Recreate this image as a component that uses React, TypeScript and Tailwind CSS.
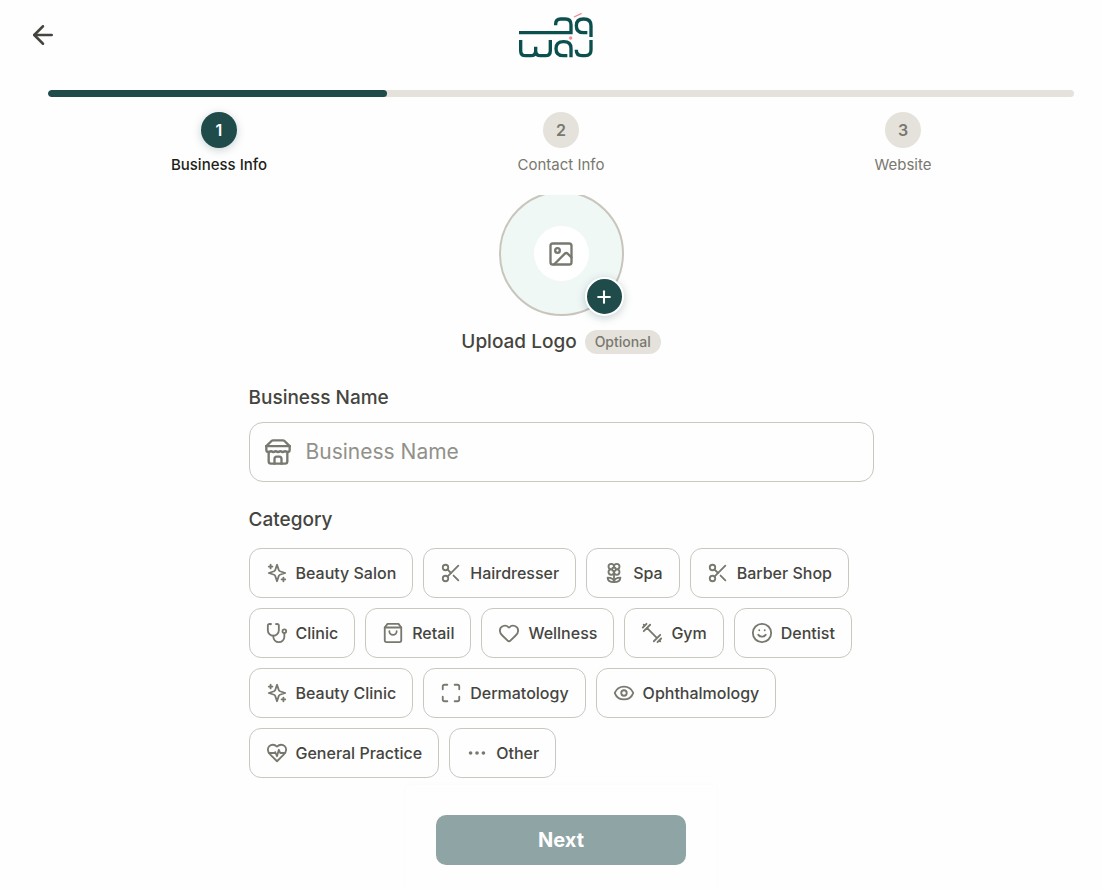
import { useState } from "react";
import type { ReactNode } from "react";
import {
  ArrowLeft,
  Ellipsis,
  Eye,
  Heart,
  Image,
  Maximize,
  Plus,
  Scissors,
  Smile,
} from "lucide-react";

function Icon({ size = 22, children }: { size?: number; children: ReactNode }) {
  return (
    <svg
      width={size}
      height={size}
      viewBox="0 0 24 24"
      fill="none"
      stroke="currentColor"
      strokeWidth={2}
      strokeLinecap="round"
      strokeLinejoin="round"
      className="shrink-0"
      aria-hidden="true"
    >
      {children}
    </svg>
  );
}

const sparkles = (
  <Icon>
    <path d="m12 3-1.912 5.813a2 2 0 0 1-1.275 1.275L3 12l5.813 1.912a2 2 0 0 1 1.275 1.275L12 21l1.912-5.813a2 2 0 0 1 1.275-1.275L21 12l-5.813-1.912a2 2 0 0 1-1.275-1.275L12 3Z" />
    <path d="M5 3v4M19 17v4M3 5h4M17 19h4" />
  </Icon>
);

const flower = (
  <Icon>
    <path d="M12 5a3 3 0 1 1 3 3m-3-3a3 3 0 1 0-3 3m3-3v1M9 8a3 3 0 1 0 3 3M9 8h1m5 0a3 3 0 1 1-3 3m3-3h-1m-2 3v-1" />
    <circle cx="12" cy="8" r="2" />
    <path d="M12 10v12" />
    <path d="M12 22c4.2 0 7-1.667 7-5-4.2 0-7 1.667-7 5Z" />
    <path d="M12 22c-4.2 0-7-1.667-7-5 4.2 0 7 1.667 7 5Z" />
  </Icon>
);

const stethoscope = (
  <Icon>
    <path d="M4.8 2.3A.3.3 0 1 0 5 2H4a2 2 0 0 0-2 2v5a6 6 0 0 0 12 0V4a2 2 0 0 0-2-2h-1a.2.2 0 1 0 .3.3" />
    <path d="M8 15v1a6 6 0 0 0 12 0v-4" />
    <circle cx="20" cy="10" r="2" />
  </Icon>
);

const bag = (
  <Icon>
    <path d="M6 2 3 6v14a2 2 0 0 0 2 2h14a2 2 0 0 0 2-2V6l-3-4Z" />
    <path d="M3 6h18M16 10a4 4 0 0 1-8 0" />
  </Icon>
);

const dumbbell = (
  <Icon>
    <path d="m6.5 6.5 11 11M21 21l-1-1M3 3l1 1M18 22l4-4M2 6l4-4M3 10l7-7M14 21l7-7" />
  </Icon>
);

const heartPulse = (
  <Icon>
    <path d="M19 14c1.49-1.46 3-3.21 3-5.5A5.5 5.5 0 0 0 16.5 3c-1.76 0-3 .5-4.5 2-1.5-1.5-2.74-2-4.5-2A5.5 5.5 0 0 0 2 8.5c0 2.3 1.5 4.05 3 5.5l7 7Z" />
    <path d="M3.22 12H9.5l.5-1 2 4.5 2-7 1.5 3.5h5.27" />
  </Icon>
);

const storefront = (
  <Icon size={28}>
    <path d="m2 7 4.41-4.41A2 2 0 0 1 7.83 2h8.34a2 2 0 0 1 1.42.59L22 7" />
    <path d="M4 12v8a2 2 0 0 0 2 2h12a2 2 0 0 0 2-2v-8" />
    <path d="M15 22v-4a2 2 0 0 0-2-2h-2a2 2 0 0 0-2 2v4M2 7h20" />
    <path d="M22 7v3a2 2 0 0 1-2 2 2.7 2.7 0 0 1-1.59-.63.7.7 0 0 0-.82 0A2.7 2.7 0 0 1 16 12a2.7 2.7 0 0 1-1.59-.63.7.7 0 0 0-.82 0A2.7 2.7 0 0 1 12 12a2.7 2.7 0 0 1-1.59-.63.7.7 0 0 0-.82 0A2.7 2.7 0 0 1 8 12a2.7 2.7 0 0 1-1.59-.63.7.7 0 0 0-.82 0A2.7 2.7 0 0 1 4 12a2 2 0 0 1-2-2V7" />
  </Icon>
);

const steps = ["Business Info", "Contact Info", "Website"];

const categories = [
  { label: "Beauty Salon", icon: sparkles },
  { label: "Hairdresser", icon: <Scissors size={22} /> },
  { label: "Spa", icon: flower },
  { label: "Barber Shop", icon: <Scissors size={22} /> },
  { label: "Clinic", icon: stethoscope },
  { label: "Retail", icon: bag },
  { label: "Wellness", icon: <Heart size={22} /> },
  { label: "Gym", icon: dumbbell },
  { label: "Dentist", icon: <Smile size={22} /> },
  { label: "Beauty Clinic", icon: sparkles },
  { label: "Dermatology", icon: <Maximize size={22} /> },
  { label: "Ophthalmology", icon: <Eye size={22} /> },
  { label: "General Practice", icon: heartPulse },
  { label: "Other", icon: <Ellipsis size={22} /> },
];

function Logo() {
  return (
    <svg width="76" height="48" viewBox="54 33 228 144" fill="none" role="img" aria-label="Waj">
      <g stroke="#0b4f4f" strokeWidth="10">
        <path d="M57 98H218M167 76V72Q167 57 182 57H196Q213 57 213 74V98" />
        <path d="M273 111V77Q273 57 251 57Q229 57 229 77Q229 98 251 98H262" />
        <path d="M62 120V152Q62 167 77 167H92Q107 167 107 152V140M107 152Q107 167 122 167H136Q151 167 151 152V120" />
        <path d="M213 172V145Q213 125 191 125Q168 125 168 146Q168 167 191 167H202" />
        <path d="M273 120V150Q273 167 256 167H246Q229 167 229 151V149" />
      </g>
      <path d="m222 51 23-11" stroke="#f58a9b" strokeWidth="4" />
      <circle cx="212" cy="114" r="5" fill="#f58a9b" />
    </svg>
  );
}

function Stepper({ current }: { current: number }) {
  return (
    <div className="px-7">
      <div className="h-[7px] overflow-hidden rounded-full bg-[#e5e2dc]">
        <div className="h-full w-[33%] rounded-full bg-[#1f4b4b]" />
      </div>
      <ol className="mt-[15px] grid grid-cols-3">
        {steps.map((step, i) => (
          <li key={step} className="flex flex-col items-center gap-[7px]">
            <span
              className={
                i === current
                  ? "flex size-9 items-center justify-center rounded-full bg-[#1f4b4b] font-semibold text-white shadow-[0_2px_8px_rgba(31,75,75,0.25)]"
                  : "flex size-9 items-center justify-center rounded-full bg-[#e5e2dc] font-semibold text-[#78786f]"
              }
            >
              {i + 1}
            </span>
            <span
              className={
                i === current
                  ? "text-[15px] leading-5 font-medium text-[#1e1e1a]"
                  : "text-[15px] leading-5 text-[#78786f]"
              }
            >
              {step}
            </span>
          </li>
        ))}
      </ol>
    </div>
  );
}

export default function App() {
  const [name, setName] = useState("");
  const [category, setCategory] = useState("");

  return (
    <div className="min-h-screen bg-[#fefefe] pl-5 font-['Inter',sans-serif] text-[#45453f]">
      <header className="flex h-[90px] items-start pl-2 pr-12">
        <button type="button" aria-label="Back" className="mt-5">
          <ArrowLeft size={30} />
        </button>
        <div className="flex flex-1 justify-center pt-[11px]">
          <Logo />
        </div>
      </header>

      <Stepper current={0} />

      <main className="mt-5 overflow-hidden px-7">
        <form className="mx-auto max-w-[625px]" onSubmit={(e) => e.preventDefault()}>
          <div className="-mt-1 flex flex-col items-center">
            <button
              type="button"
              aria-label="Upload Logo"
              className="relative flex size-[125px] items-center justify-center rounded-full border-2 border-[#c8c5bd] bg-[#f0f8f6]"
            >
              <span className="flex size-[55px] items-center justify-center rounded-full bg-white text-[#78786f]">
                <Image size={28} />
              </span>
              <span className="absolute -bottom-0.5 -right-0.5 flex size-[39px] items-center justify-center rounded-full border-2 border-white bg-[#1f4b4b] text-white shadow-[0_2px_8px_rgba(31,75,75,0.25)]">
                <Plus size={20} strokeWidth={2.5} />
              </span>
            </button>
            <div className="mt-3 flex items-center gap-2">
              <span className="text-[19px] leading-7 font-medium">Upload Logo</span>
              <span className="flex h-6 items-center rounded-full bg-[#e5e2dc] px-2.5 text-sm font-medium text-[#78786f]">
                Optional
              </span>
            </div>
          </div>

          <label htmlFor="business-name" className="mt-7 block text-[19px] leading-7 font-medium">
            Business Name
          </label>
          <div className="mt-2.5 flex h-[60px] items-center gap-3.5 rounded-[14px] border border-[#c8c8be] px-3.5 text-[#78786f]">
            {storefront}
            <input
              id="business-name"
              value={name}
              onChange={(e) => setName(e.target.value)}
              placeholder="Business Name"
              className="min-w-0 flex-1 bg-transparent text-[21px] outline-none placeholder:text-[#91918a]"
            />
          </div>

          <fieldset>
            <legend className="pt-6 text-[19px] leading-7 font-medium">Category</legend>
            <div className="mt-3.5 flex flex-wrap gap-2.5">
              {categories.map(({ label, icon }) => (
                <button
                  key={label}
                  type="button"
                  aria-pressed={category === label}
                  onClick={() => setCategory(label)}
                  className="flex h-[50px] items-center gap-2 rounded-xl border border-[#c8c8be] px-4 text-[#78786f]"
                >
                  {icon}
                  <span className="font-medium text-[#45453f]">{label}</span>
                </button>
              ))}
            </div>
          </fieldset>

          <div className="mx-auto mt-[7px] w-[310px] max-w-full px-[30px] pb-[25px] pt-[30px] shadow-[0_0_6px_rgba(0,0,0,0.02)]">
            <button
              type="submit"
              className="h-[50px] w-full rounded-[10px] bg-[#8fa5a5] text-xl font-bold text-white"
            >
              Next
            </button>
          </div>
        </form>
      </main>
    </div>
  );
}
